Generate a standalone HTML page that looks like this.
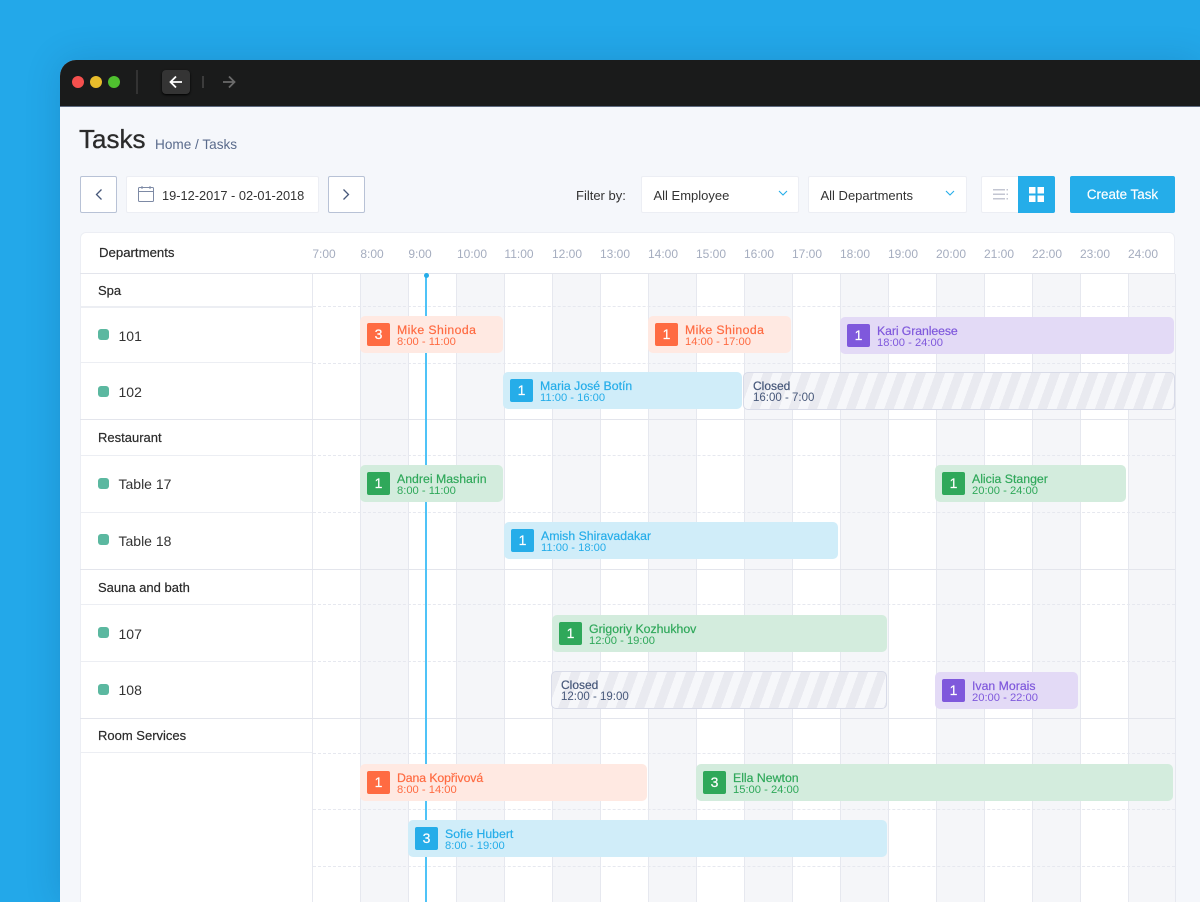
<!DOCTYPE html>
<html><head><meta charset="utf-8"><style>
*{box-sizing:border-box}
html{margin:0;padding:0;width:1200px;height:902px;overflow:hidden}
body{margin:0;padding:0;width:1200px;height:902px;overflow:hidden;background:#23a8e9;font-family:"Liberation Sans",sans-serif;position:relative;color:#2b2b2b}
.a{position:absolute}
.t{position:absolute;white-space:nowrap;line-height:1}
#win{left:60px;top:60px;width:1140px;height:842px;background:#f5f7fb;border-radius:16px 0 0 0;box-shadow:0 0 36px rgba(0,40,90,.16)}
.btn{position:absolute;background:#fff;border:1px solid #b8c2d6;border-radius:2px}
.box{position:absolute;background:#fff;border:1px solid #eceef4;border-radius:2px}
.h{position:absolute;top:247px;font-size:12px;line-height:14px;color:#a5adbf;width:48px;text-align:center}
.v{position:absolute;top:274px;height:628px;width:1px;background:#e6e8ef}
.s{position:absolute;top:274px;height:628px;width:48px;background:#f5f6f9}
.d{position:absolute;left:313px;width:862px;height:0;border-top:1px dashed #e6e8ef}
.l{position:absolute;left:80px;width:232px;height:1px;background:#eceef3}
.f{position:absolute;left:80px;width:1095px;height:1px;background:#e3e5ec}
.g{position:absolute;left:98px;font-size:13px;line-height:14px;color:#2b2b2b;-webkit-text-stroke:.2px #2b2b2b;white-space:nowrap}
.r{position:absolute;left:118.500px;font-size:14px;line-height:16px;color:#333;white-space:nowrap}
.m{position:absolute;left:98px;width:11px;height:11px;border-radius:3px;background:#5bb8a0}
.e{position:absolute;height:37px;border-radius:5px}
.b{position:absolute;left:7px;top:7px;width:23px;height:23px;border-radius:2px;color:#fff;font-size:14px;line-height:23px;text-align:center;-webkit-text-stroke:.2px #fff}
.n{position:absolute;left:37px;top:7px;font-size:12.300px;line-height:14px;white-space:nowrap;-webkit-text-stroke:.2px currentColor}
.i{position:absolute;left:37px;top:20px;font-size:11.200px;line-height:13px;white-space:nowrap}
.o{background:#ffe9e2;color:#ff6b42}.o .b{background:#ff6b42}
.p{background:#e3daf6;color:#7f58dc}.p .b{background:#7f58dc}
.c{background:#d0edf9;color:#25ade9}.c .b{background:#25ade9}
.k{background:#d3ecdd;color:#2fa85a}.k .b{background:#2fa85a}
.x{height:38px;border:1px solid #d8dbe8;color:#47587a;background:repeating-linear-gradient(110deg,#e9eaf0 0,#e9eaf0 9px,#f6f7fa 9px,#f6f7fa 18px)}
.x .n{left:9px;top:6px;font-size:12px}.x .i{left:9px;top:19px;font-size:11.500px}
</style></head><body>
<div id="win" class="a"></div>
<div class="a" style="left:60px;top:60px;width:1140px;height:47px;background:#1a1b1b;border-radius:16px 0 0 0;border-bottom:1px solid #5d6a80"></div>
<div class="a" style="left:72px;top:76px;width:12px;height:12px;border-radius:50%;background:#f5504e"></div>
<div class="a" style="left:90px;top:76px;width:12px;height:12px;border-radius:50%;background:#e8bc2b"></div>
<div class="a" style="left:108px;top:76px;width:12px;height:12px;border-radius:50%;background:#4fc02f"></div>
<div class="a" style="left:136px;top:70px;width:2px;height:24px;background:#333"></div>
<div class="a" style="left:162px;top:70px;width:28px;height:24px;border-radius:4px;background:#343434;box-shadow:0 1px 2px #000"></div>
<svg class="a" style="left:169px;top:75px" width="14" height="14" viewBox="0 0 14 14" fill="none" stroke="#fff" stroke-width="1.800"><path d="M13 7H2M7 1.500L1.500 7L7 12.500"/></svg>
<div class="a" style="left:202px;top:76px;width:2px;height:12px;background:#3c3c3c"></div>
<svg class="a" style="left:222px;top:75px" width="14" height="14" viewBox="0 0 14 14" fill="none" stroke="#6b6b6b" stroke-width="1.800"><path d="M1 7H12M7 1.500L12.500 7L7 12.500"/></svg>

<div class="t" style="left:79px;top:126px;font-size:26px;line-height:26px;color:#2b2b2b;-webkit-text-stroke:.3px #2b2b2b">Tasks</div>
<div class="t" style="left:155px;top:137px;font-size:13.600px;line-height:15px;color:#5a6b8c">Home / Tasks</div>

<div class="btn" style="left:80px;top:176px;width:37px;height:37px"></div>
<svg class="a" style="left:94px;top:188px" width="10" height="13" viewBox="0 0 10 13" fill="none" stroke="#47587a" stroke-width="1.300"><path d="M7.500 1.500L2.500 6.500L7.500 11.500"/></svg>
<div class="box" style="left:126px;top:176px;width:193px;height:37px"></div>
<svg class="a" style="left:138px;top:186px" width="17" height="17" viewBox="0 0 17 17" fill="none" stroke="#7d8aa5"><rect x=".5" y="1.500" width="15" height="14" rx="1"/><path d="M.5 5.500H15.500M4 0V3M12 0V3"/></svg>
<div class="t" style="left:162px;top:188px;font-size:12.800px;line-height:15px;color:#333">19-12-2017 - 02-01-2018</div>
<div class="btn" style="left:328px;top:176px;width:37px;height:37px"></div>
<svg class="a" style="left:341px;top:188px" width="10" height="13" viewBox="0 0 10 13" fill="none" stroke="#47587a" stroke-width="1.300"><path d="M2.500 1.500L7.500 6.500L2.500 11.500"/></svg>

<div class="t" style="left:576px;top:188px;font-size:13px;line-height:15px;color:#333">Filter by:</div>
<div class="box" style="left:641px;top:176px;width:158px;height:37px"></div>
<div class="t" style="left:653.500px;top:188px;font-size:13px;line-height:15px;color:#333">All Employee</div>
<svg class="a" style="left:778px;top:190px" width="10" height="7" viewBox="0 0 10 7" fill="none" stroke="#25ade9" stroke-width="1.100"><path d="M1 1L5 5L9 1"/></svg>
<div class="box" style="left:808px;top:176px;width:159px;height:37px"></div>
<div class="t" style="left:820.500px;top:188px;font-size:13px;line-height:15px;color:#333">All Departments</div>
<svg class="a" style="left:945px;top:190px" width="10" height="7" viewBox="0 0 10 7" fill="none" stroke="#25ade9" stroke-width="1.100"><path d="M1 1L5 5L9 1"/></svg>

<div class="box" style="left:981px;top:176px;width:40px;height:37px"></div>
<svg class="a" style="left:993px;top:188px" width="15" height="13" viewBox="0 0 15 13" fill="#c3c6d2"><path d="M0 1h12v1.500H0zM0 5.500h12v1.500H0zM0 10h12v1.500H0zM13.500 1h1.500v1.500h-1.500zM13.500 5.500h1.500v1.500h-1.500zM13.500 10h1.500v1.500h-1.500z"/></svg>
<div class="a" style="left:1018px;top:176px;width:37px;height:37px;background:#25ade9;border-radius:0 2px 2px 0"></div>
<svg class="a" style="left:1029px;top:187px" width="15" height="15" fill="#fff"><rect width="6.500" height="6.500"/><rect x="8.500" width="6.500" height="6.500"/><rect y="8.500" width="6.500" height="6.500"/><rect x="8.500" y="8.500" width="6.500" height="6.500"/></svg>
<div class="a" style="left:1070px;top:176px;width:105px;height:37px;background:#25ade9;border-radius:2px;color:#fff;font-size:13.400px;line-height:37px;text-align:center;-webkit-text-stroke:.15px #fff">Create Task</div>

<div class="a" style="left:80px;top:232px;width:1095px;height:690px;background:#fff;border:1px solid #eceef4;border-radius:6px"></div>

<div class="s" style="left:361px"></div><div class="s" style="left:457px"></div><div class="s" style="left:553px"></div><div class="s" style="left:649px"></div><div class="s" style="left:745px"></div><div class="s" style="left:841px"></div><div class="s" style="left:937px"></div><div class="s" style="left:1033px"></div><div class="s" style="left:1129px;width:46px"></div>
<div class="v" style="left:312px"></div><div class="v" style="left:360px"></div><div class="v" style="left:408px"></div><div class="v" style="left:456px"></div><div class="v" style="left:504px"></div><div class="v" style="left:552px"></div><div class="v" style="left:600px"></div><div class="v" style="left:648px"></div><div class="v" style="left:696px"></div><div class="v" style="left:744px"></div><div class="v" style="left:792px"></div><div class="v" style="left:840px"></div><div class="v" style="left:888px"></div><div class="v" style="left:936px"></div><div class="v" style="left:984px"></div><div class="v" style="left:1032px"></div><div class="v" style="left:1080px"></div><div class="v" style="left:1128px"></div><div class="v" style="left:1175px"></div>

<div class="f" style="top:273px"></div>
<div class="f" style="top:419px"></div>
<div class="f" style="top:569px"></div>
<div class="f" style="top:718px"></div>
<div class="l" style="top:306px;height:2px"></div><div class="l" style="top:362px"></div><div class="l" style="top:455px"></div><div class="l" style="top:512px"></div><div class="l" style="top:604px"></div><div class="l" style="top:661px"></div><div class="l" style="top:752px"></div>
<div class="d" style="top:306px"></div><div class="d" style="top:363px"></div><div class="d" style="top:455px"></div><div class="d" style="top:512px"></div><div class="d" style="top:604px"></div><div class="d" style="top:661px"></div><div class="d" style="top:753px"></div><div class="d" style="top:809px"></div><div class="d" style="top:866px"></div>

<div class="t" style="left:99px;top:246px;font-size:13.200px;line-height:14px;color:#2b2b2b;-webkit-text-stroke:.2px #2b2b2b">Departments</div>
<div class="h" style="left:300px">7:00</div><div class="h" style="left:348px">8:00</div><div class="h" style="left:396px">9:00</div><div class="h" style="left:448px">10:00</div><div class="h" style="left:495px">11:00</div><div class="h" style="left:543px">12:00</div><div class="h" style="left:591px">13:00</div><div class="h" style="left:639px">14:00</div><div class="h" style="left:687px">15:00</div><div class="h" style="left:735px">16:00</div><div class="h" style="left:783px">17:00</div><div class="h" style="left:831px">18:00</div><div class="h" style="left:879px">19:00</div><div class="h" style="left:927px">20:00</div><div class="h" style="left:975px">21:00</div><div class="h" style="left:1023px">22:00</div><div class="h" style="left:1071px">23:00</div><div class="h" style="left:1119px">24:00</div>

<div class="g" style="top:284px">Spa</div>
<div class="m" style="top:329px"></div><div class="r" style="top:328px">101</div>
<div class="m" style="top:386px"></div><div class="r" style="top:384px">102</div>
<div class="g" style="top:431px">Restaurant</div>
<div class="m" style="top:478px"></div><div class="r" style="top:476px">Table 17</div>
<div class="m" style="top:534px"></div><div class="r" style="top:533px">Table 18</div>
<div class="g" style="top:581px">Sauna and bath</div>
<div class="m" style="top:627px"></div><div class="r" style="top:626px">107</div>
<div class="m" style="top:684px"></div><div class="r" style="top:682px">108</div>
<div class="g" style="top:729px">Room Services</div>

<div class="a" style="left:425px;top:275px;width:2px;height:627px;background:#4fc3f7"></div>
<div class="a" style="left:423.500px;top:272.500px;width:5px;height:5px;border-radius:50%;background:#25ade9"></div>

<div class="e o" style="left:360px;top:316px;width:143px"><div class="b">3</div><div class="n" style="letter-spacing:.4px">Mike Shinoda</div><div class="i">8:00 - 11:00</div></div>
<div class="e o" style="left:648px;top:316px;width:143px"><div class="b">1</div><div class="n" style="letter-spacing:.4px">Mike Shinoda</div><div class="i">14:00 - 17:00</div></div>
<div class="e p" style="left:840px;top:317px;width:334px"><div class="b">1</div><div class="n" style="letter-spacing:-.1px">Kari Granleese</div><div class="i">18:00 - 24:00</div></div>
<div class="e c" style="left:503px;top:372px;width:239px"><div class="b">1</div><div class="n">Maria José Botín</div><div class="i">11:00 - 16:00</div></div>
<div class="e x" style="left:743px;top:372px;width:432px"><div class="n">Closed</div><div class="i">16:00 - 7:00</div></div>
<div class="e k" style="left:360px;top:465px;width:143px"><div class="b">1</div><div class="n">Andrei Masharin</div><div class="i">8:00 - 11:00</div></div>
<div class="e k" style="left:935px;top:465px;width:191px"><div class="b">1</div><div class="n">Alicia Stanger</div><div class="i">20:00 - 24:00</div></div>
<div class="e c" style="left:504px;top:522px;width:334px"><div class="b">1</div><div class="n">Amish Shiravadakar</div><div class="i">11:00 - 18:00</div></div>
<div class="e k" style="left:552px;top:615px;width:335px"><div class="b">1</div><div class="n">Grigoriy Kozhukhov</div><div class="i">12:00 - 19:00</div></div>
<div class="e x" style="left:551px;top:671px;width:336px"><div class="n">Closed</div><div class="i">12:00 - 19:00</div></div>
<div class="e p" style="left:935px;top:672px;width:143px"><div class="b">1</div><div class="n">Ivan Morais</div><div class="i">20:00 - 22:00</div></div>
<div class="e o" style="left:360px;top:764px;width:287px"><div class="b">1</div><div class="n" style="letter-spacing:-.1px">Dana Kopřivová</div><div class="i">8:00 - 14:00</div></div>
<div class="e k" style="left:696px;top:764px;width:477px"><div class="b">3</div><div class="n">Ella Newton</div><div class="i">15:00 - 24:00</div></div>
<div class="e c" style="left:408px;top:820px;width:479px"><div class="b">3</div><div class="n">Sofie Hubert</div><div class="i">8:00 - 19:00</div></div>
</body></html>
